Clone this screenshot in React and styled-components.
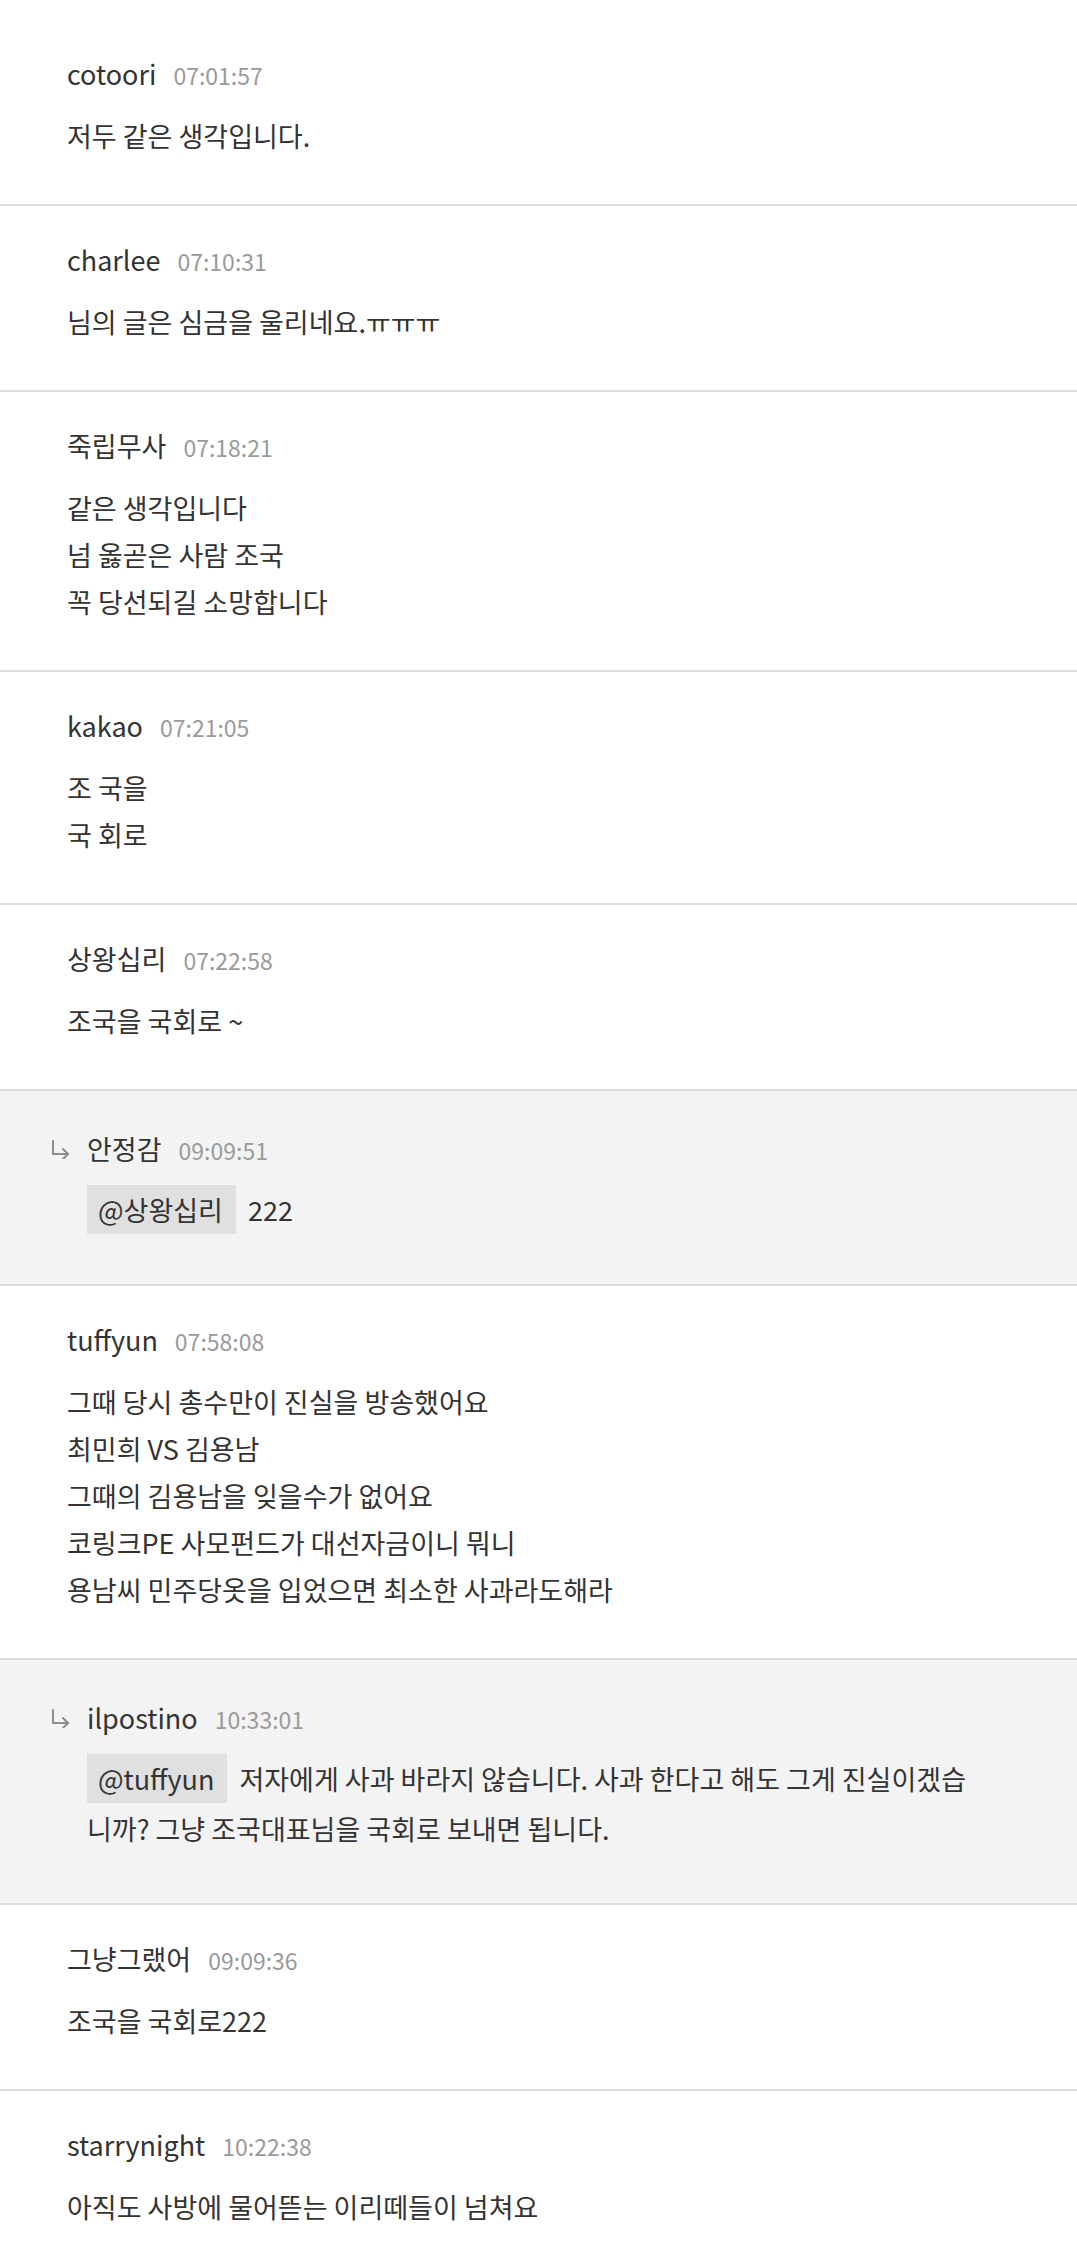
import React from "react";
import styled, { createGlobalStyle } from "styled-components";

//

const GlobalStyle = createGlobalStyle`
    html, body {
        margin: 0;
        padding: 0;
        background: #ffffff;
    }
    body {
        font-family: "Noto Sans CJK KR", "Noto Sans", sans-serif;
        color: #333333;
    }
`;

const comments = [
    { name: "cotoori", time: "07:01:57", lines: ["저두 같은 생각입니다."] },
    { name: "charlee", time: "07:10:31", lines: ["님의 글은 심금을 울리네요.ㅠㅠㅠ"] },
    {
        name: "죽립무사",
        time: "07:18:21",
        lines: ["같은 생각입니다", "넘 옳곧은 사람 조국", "꼭 당선되길 소망합니다"],
    },
    { name: "kakao", time: "07:21:05", lines: ["조 국을", "국 회로"] },
    { name: "상왕십리", time: "07:22:58", lines: ["조국을 국회로 ~"] },
    { name: "안정감", time: "09:09:51", reply: true, mention: "상왕십리", text: "222" },
    {
        name: "tuffyun",
        time: "07:58:08",
        lines: [
            "그때 당시 총수만이 진실을 방송했어요",
            "최민희 VS 김용남",
            "그때의 김용남을 잊을수가 없어요",
            "코링크PE 사모펀드가 대선자금이니 뭐니",
            "용남씨 민주당옷을 입었으면 최소한 사과라도해라",
        ],
    },
    {
        name: "ilpostino",
        time: "10:33:01",
        reply: true,
        mention: "tuffyun",
        text: "저자에게 사과 바라지 않습니다. 사과 한다고 해도 그게 진실이겠습니까? 그냥 조국대표님을 국회로 보내면 됩니다.",
    },
    { name: "그냥그랬어", time: "09:09:36", lines: ["조국을 국회로222"] },
    { name: "starrynight", time: "10:22:38", lines: ["아직도 사방에 물어뜯는 이리떼들이 넘쳐요"] },
];

//

const List = styled.div`
    padding-top: 20px;
    display: flex;
    flex-direction: column;
`;

const Item = styled.div`
    border-bottom: 2px solid #dcdcdc;
    background: ${(p) => (p.$reply ? "#f3f3f3" : "#ffffff")};
    padding: ${(p) => (p.$reply ? "38px 102px 49px 50px" : "34px 37px 45px 67px")};
    &:last-child {
        border-bottom: none;
    }
`;

const Header = styled.div`
    display: flex;
    align-items: baseline;
    height: 40px;
    line-height: 40px;
`;

const Arrow = styled.svg`
    width: 21px;
    height: 20px;
    margin-right: 16px;
    align-self: center;
    flex-shrink: 0;
`;

const Name = styled.span`
    font-size: 27px;
    color: #333333;
`;

const Time = styled.span`
    font-size: 23px;
    color: #9a9a9a;
    margin-left: 17px;
`;

const Body = styled.div`
    margin-top: ${(p) => (p.$reply ? "16px" : "18px")};
    margin-left: ${(p) => (p.$reply ? "37px" : "0")};
    font-size: 27px;
    line-height: ${(p) => (p.$reply ? "50px" : "47px")};
    color: #333333;
`;

const Line = styled.div``;

const Mention = styled.span`
    display: inline-block;
    background: #e0e0e0;
    padding: 0 13px 0 11px;
    line-height: 49px;
    margin-right: 12px;
`;

//

const ReplyArrow = () => (
    <Arrow viewBox="0 0 21 20" fill="none" stroke="#8c8c8c" strokeWidth="2" strokeLinecap="round" strokeLinejoin="round">
        <path d="M3 2 V15 H18" />
        <path d="M13 10 L18 15 L13 20" />
    </Arrow>
);

const Comment = ({ item }) => (
    <Item $reply={item.reply}>
        <Header>
            {item.reply && <ReplyArrow />}
            <Name>{item.name}</Name>
            <Time>{item.time}</Time>
        </Header>
        <Body $reply={item.reply}>
            {item.reply ? (
                <>
                    <Mention>{`@${item.mention}`}</Mention>
                    {item.text}
                </>
            ) : (
                item.lines.map((l, i) => <Line key={i}>{l}</Line>)
            )}
        </Body>
    </Item>
);

const App = () => {
    return (
        <>
            <GlobalStyle />
            <List>
                {comments.map((c, i) => (
                    <Comment key={i} item={c} />
                ))}
            </List>
        </>
    );
};

export default App;
